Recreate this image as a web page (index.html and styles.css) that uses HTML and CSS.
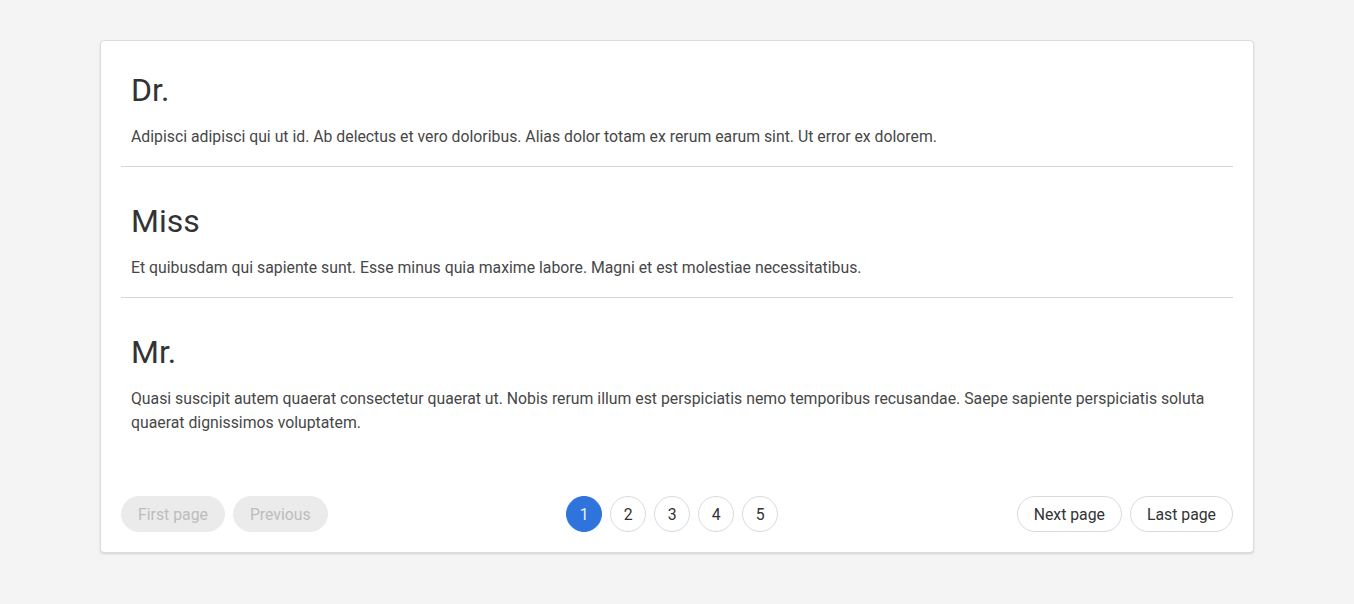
FILE: index.html
```html
<!DOCTYPE html>
<html lang="en">
<head>
    <meta charset="UTF-8">
    <meta name="viewport" content="width=device-width, initial-scale=1.0">
    <title>Titles</title>
    <link rel="stylesheet" href="styles.css">
</head>
<body>
    <div class="card">
        <div class="entries">
            <div class="entry">
                <h2>Dr.</h2>
                <p>Adipisci adipisci qui ut id. Ab delectus et vero doloribus. Alias dolor totam ex rerum earum sint. Ut error ex dolorem.</p>
            </div>
            <div class="entry">
                <h2>Miss</h2>
                <p>Et quibusdam qui sapiente sunt. Esse minus quia maxime labore. Magni et est molestiae necessitatibus.</p>
            </div>
            <div class="entry">
                <h2>Mr.</h2>
                <p>Quasi suscipit autem quaerat consectetur quaerat ut. Nobis rerum illum est perspiciatis nemo temporibus recusandae. Saepe sapiente perspiciatis soluta quaerat dignissimos voluptatem.</p>
            </div>
        </div>

        <div class="pager">
            <div class="pager-group">
                <button class="btn" disabled>First page</button>
                <button class="btn" disabled>Previous</button>
            </div>
            <div class="pager-group">
                <button class="page active">1</button>
                <button class="page">2</button>
                <button class="page">3</button>
                <button class="page">4</button>
                <button class="page">5</button>
            </div>
            <div class="pager-group">
                <button class="btn">Next page</button>
                <button class="btn">Last page</button>
            </div>
        </div>
    </div>
</body>
</html>
```

FILE: styles.css
```css
body {
    font-family: Roboto, 'Liberation Sans', sans-serif;
    margin: 0;
    padding: 40px 100px;
    background: #f4f4f4;
    color: #333;
}
.card {
    background: white;
    border: 1px solid #dcdcdc;
    border-radius: 4px;
    box-shadow: 0 1px 2px rgba(0,0,0,0.14);
    padding: 20px;
}
.entry {
    padding: 10px 10px 17px;
    border-bottom: 1px solid #d6d6d6;
}
.entry + .entry {
    padding-top: 35px;
}
.entry:last-child {
    border-bottom: none;
}
h2 {
    margin: 0 0 16px;
    font-size: 32px;
    font-weight: 400;
    line-height: 38px;
    color: #333;
}
p {
    margin: 0;
    font-size: 15.8px;
    line-height: 24px;
    color: #474747;
}
.pager {
    display: flex;
    justify-content: space-between;
    align-items: center;
    margin-top: 44px;
}
.pager-group {
    display: flex;
    gap: 8px;
}
.btn, .page {
    font-family: inherit;
    font-size: 15.8px;
    height: 36px;
    border: 1px solid #dadada;
    background: white;
    color: #333;
    cursor: pointer;
}
.btn {
    padding: 0 16px;
    border-radius: 18px;
}
.btn:disabled {
    background: #ebebeb;
    border-color: #ebebeb;
    color: #bdbdbd;
    cursor: default;
}
.page {
    width: 36px;
    padding: 0;
    border-radius: 50%;
}
.page.active {
    background: #2f74dc;
    border-color: #2f74dc;
    color: #e8f0fc;
}
```
